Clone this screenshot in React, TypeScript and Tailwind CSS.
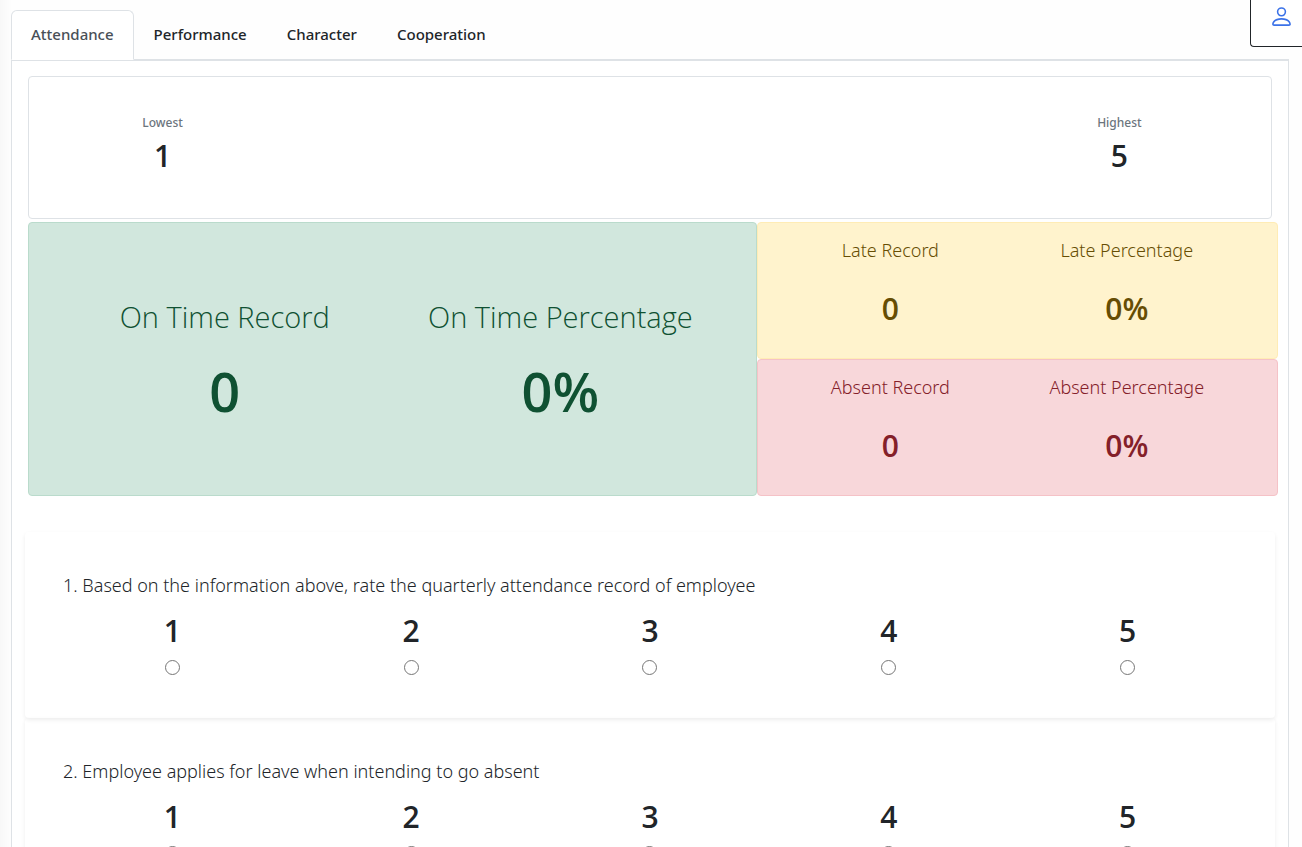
import { useState } from "react";
import clsx from "clsx";
import { BsPerson } from "react-icons/bs";

const tabs = ["Attendance", "Performance", "Character", "Cooperation"];

const questions = [
  "Based on the information above, rate the quarterly attendance record of employee",
  "Employee applies for leave when intending to go absent",
];

const scores = [1, 2, 3, 4, 5];

function ScaleEnd({ label, value }: { label: string; value: number }) {
  return (
    <div className="text-center">
      <p className="font-['Noto_Sans',sans-serif] text-xs leading-5 font-medium text-[#6c757d]">{label}</p>
      <p className="mt-[3px] text-[30px] leading-10 font-semibold">{value}</p>
    </div>
  );
}

function Stat({ label, value }: { label: string; value: string }) {
  return (
    <div className="text-center">
      <h3 className="font-['Noto_Sans',sans-serif] text-lg leading-6 font-light">{label}</h3>
      <p className="mt-[27px] text-[30px] leading-10 font-semibold">{value}</p>
    </div>
  );
}

function BigStat({ label, value }: { label: string; value: string }) {
  return (
    <div className="text-center">
      <h2 className="text-[29px] leading-10 font-light">{label}</h2>
      <p className="mt-[18px] text-[54px] leading-[72px] font-semibold">{value}</p>
    </div>
  );
}

function Question({ index, text }: { index: number; text: string }) {
  return (
    <fieldset className="min-w-0 rounded px-7 pt-[39px] pb-[43px] shadow-[0_2px_4px_rgba(0,0,0,0.075)]">
      <legend className="float-left w-full pl-2.5 font-['Noto_Sans',sans-serif] text-lg leading-7 font-light">
        {index}. {text}
      </legend>
      <div className="clear-both grid grid-cols-5 pt-3">
        {scores.map((score) => (
          <label key={score} className="flex flex-col items-center text-[30px] leading-10 font-semibold">
            {score}
            <input
              type="radio"
              name={`question-${index}`}
              value={score}
              className="mt-[9px] h-[15px] w-[15px] appearance-none rounded-full border border-[#767676] bg-white checked:border-4 checked:border-[#0d6efd]"
            />
          </label>
        ))}
      </div>
    </fieldset>
  );
}

export default function App() {
  const [active, setActive] = useState("Attendance");

  return (
    <div className="relative h-screen overflow-hidden bg-[linear-gradient(to_right,#f8f8f8,#fefefe_12px)] font-['Open_Sans','Noto_Sans',sans-serif] text-[#212529]">
      <button
        type="button"
        aria-label="Account"
        className="absolute top-0 right-0 flex h-[47px] w-[52px] justify-end rounded-bl border-b border-l border-[#212529] bg-white pt-1 pr-2 text-[#3b72e8]"
      >
        <BsPerson className="h-[25px] w-[25px]" />
      </button>

      <main className="pt-2.5 pr-[13px] pl-[11px]">
        <div role="tablist" className="flex border-b border-[#dee2e6]">
          {tabs.map((tab) => (
            <button
              key={tab}
              type="button"
              role="tab"
              aria-selected={tab === active}
              onClick={() => setActive(tab)}
              className={clsx(
                "-mb-px h-[50px] rounded-t-md border px-[19px] pb-0.5 font-['Noto_Sans',sans-serif] text-[15px] font-medium",
                tab === active
                  ? "border-[#dee2e6] border-b-white bg-white text-[#495057]"
                  : "border-transparent",
              )}
            >
              {tab}
            </button>
          ))}
        </div>

        <div role="tabpanel" className="border border-[#dee2e6] bg-white px-4 pt-[15px]">
          <section className="rounded border border-[#dee2e6] pt-9 pr-8 pb-[42px] pl-3.5">
            <div className="grid grid-cols-5">
              <ScaleEnd label="Lowest" value={1} />
              <div className="col-start-5">
                <ScaleEnd label="Highest" value={5} />
              </div>
            </div>
          </section>

          <section className="mt-[3px] -mr-1.5 grid grid-cols-12">
            <div className="col-span-7 grid grid-cols-2 content-center rounded border border-[#badbcc] bg-[#d1e7dd] px-7 pt-1.5 text-[#0f5132]">
              <BigStat label="On Time Record" value="0" />
              <BigStat label="On Time Percentage" value="0%" />
            </div>
            <div className="col-span-5">
              <div className="grid grid-cols-2 rounded border border-[#ffecb5] bg-[#fff3cd] pt-[15px] pr-8 pb-[29px] pl-3.5 text-[#664d03]">
                <Stat label="Late Record" value="0" />
                <Stat label="Late Percentage" value="0%" />
              </div>
              <div className="grid grid-cols-2 rounded border border-[#f5c2c7] bg-[#f8d7da] pt-[15px] pr-8 pb-[29px] pl-3.5 text-[#842029]">
                <Stat label="Absent Record" value="0" />
                <Stat label="Absent Percentage" value="0%" />
              </div>
            </div>
          </section>

          <form className="mt-9 -mr-[3px] -ml-[3px]">
            {questions.map((text, i) => (
              <Question key={text} index={i + 1} text={text} />
            ))}
          </form>
        </div>
      </main>
    </div>
  );
}
